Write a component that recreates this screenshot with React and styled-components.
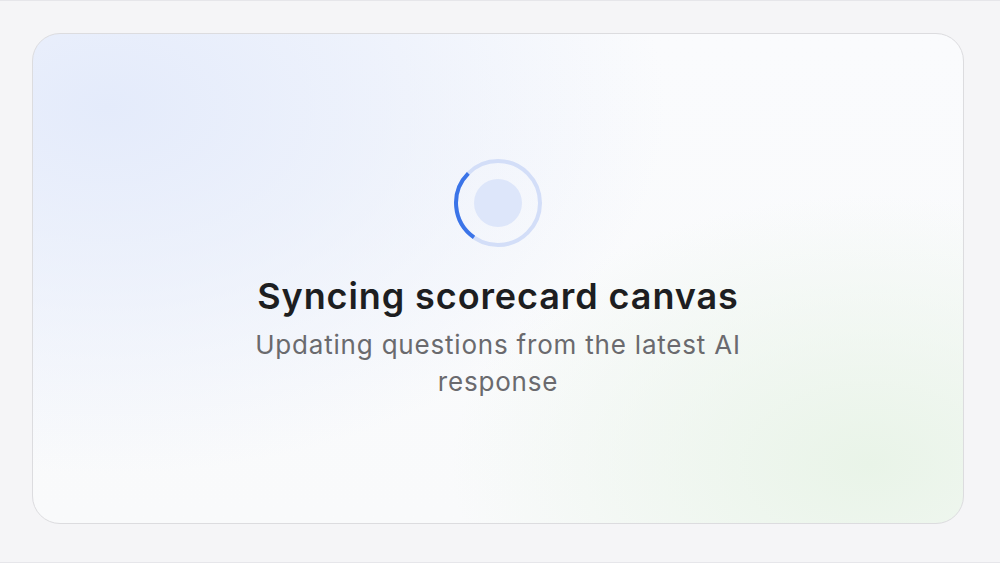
import React from 'react';
import styled, { createGlobalStyle } from 'styled-components';

const GlobalStyle = createGlobalStyle`
  html, body {
    margin: 0;
    padding: 0;
    background: #f5f5f7;
  }
  body {
    font-family: Inter, "Noto Sans", sans-serif;
  }
`;

const Page = styled.div`
  width: 1000px;
  height: 563px;
  box-sizing: border-box;
  padding: 32px 36px 38px 32px;
  background: #f5f5f7;
  border-top: 1px solid #e6e6ea;
  border-bottom: 1px solid #e6e6ea;
  display: flex;
`;

const Card = styled.div`
  flex: 1;
  border: 1px solid #dcdcdf;
  border-radius: 28px;
  background:
    radial-gradient(ellipse 60% 75% at 8% 15%, #e4ebfb 0%, rgba(228, 235, 251, 0.6) 45%, rgba(228, 235, 251, 0) 100%),
    radial-gradient(ellipse 45% 55% at 90% 88%, #e9f4e8 0%, rgba(233, 244, 232, 0.5) 50%, rgba(233, 244, 232, 0) 100%),
    linear-gradient(180deg, #fafbfd 0%, #f9fafb 100%);
  display: flex;
  flex-direction: column;
  align-items: center;
  padding-top: 124px;
  box-sizing: border-box;
`;

const Spinner = styled.div`
  width: 90px;
  height: 90px;
  position: relative;
  display: flex;
  align-items: center;
  justify-content: center;
`;

const Core = styled.div`
  width: 48px;
  height: 48px;
  border-radius: 50%;
  background: #dde6fa;
`;

const Ring = styled.svg`
  position: absolute;
  inset: 0;
`;

const Title = styled.h1`
  margin: 26px 0 0;
  font-size: 36px;
  font-weight: 600;
  letter-spacing: 0.9px;
  color: #1d1e21;
  line-height: 44px;
`;

const Subtitle = styled.p`
  margin: 8px 0 0;
  max-width: 520px;
  text-align: center;
  font-size: 26px;
  letter-spacing: 0.8px;
  line-height: 37px;
  color: #6a6a6e;
`;

export default function App() {
  return (
    <>
      <GlobalStyle />
      <Page>
        <Card>
          <Spinner>
            <Ring width="90" height="90" viewBox="0 0 90 90">
              <circle cx="45" cy="45" r="42" fill="none" stroke="#d3def8" strokeWidth="4" />
              <path
                d="M 15.3 15.3 A 42 42 0 0 0 21 79.4"
                fill="none"
                stroke="#3b74e8"
                strokeWidth="4"
                strokeLinecap="butt"
              />
            </Ring>
            <Core />
          </Spinner>
          <Title>Syncing scorecard canvas</Title>
          <Subtitle>Updating questions from the latest AI response</Subtitle>
        </Card>
      </Page>
    </>
  );
}
